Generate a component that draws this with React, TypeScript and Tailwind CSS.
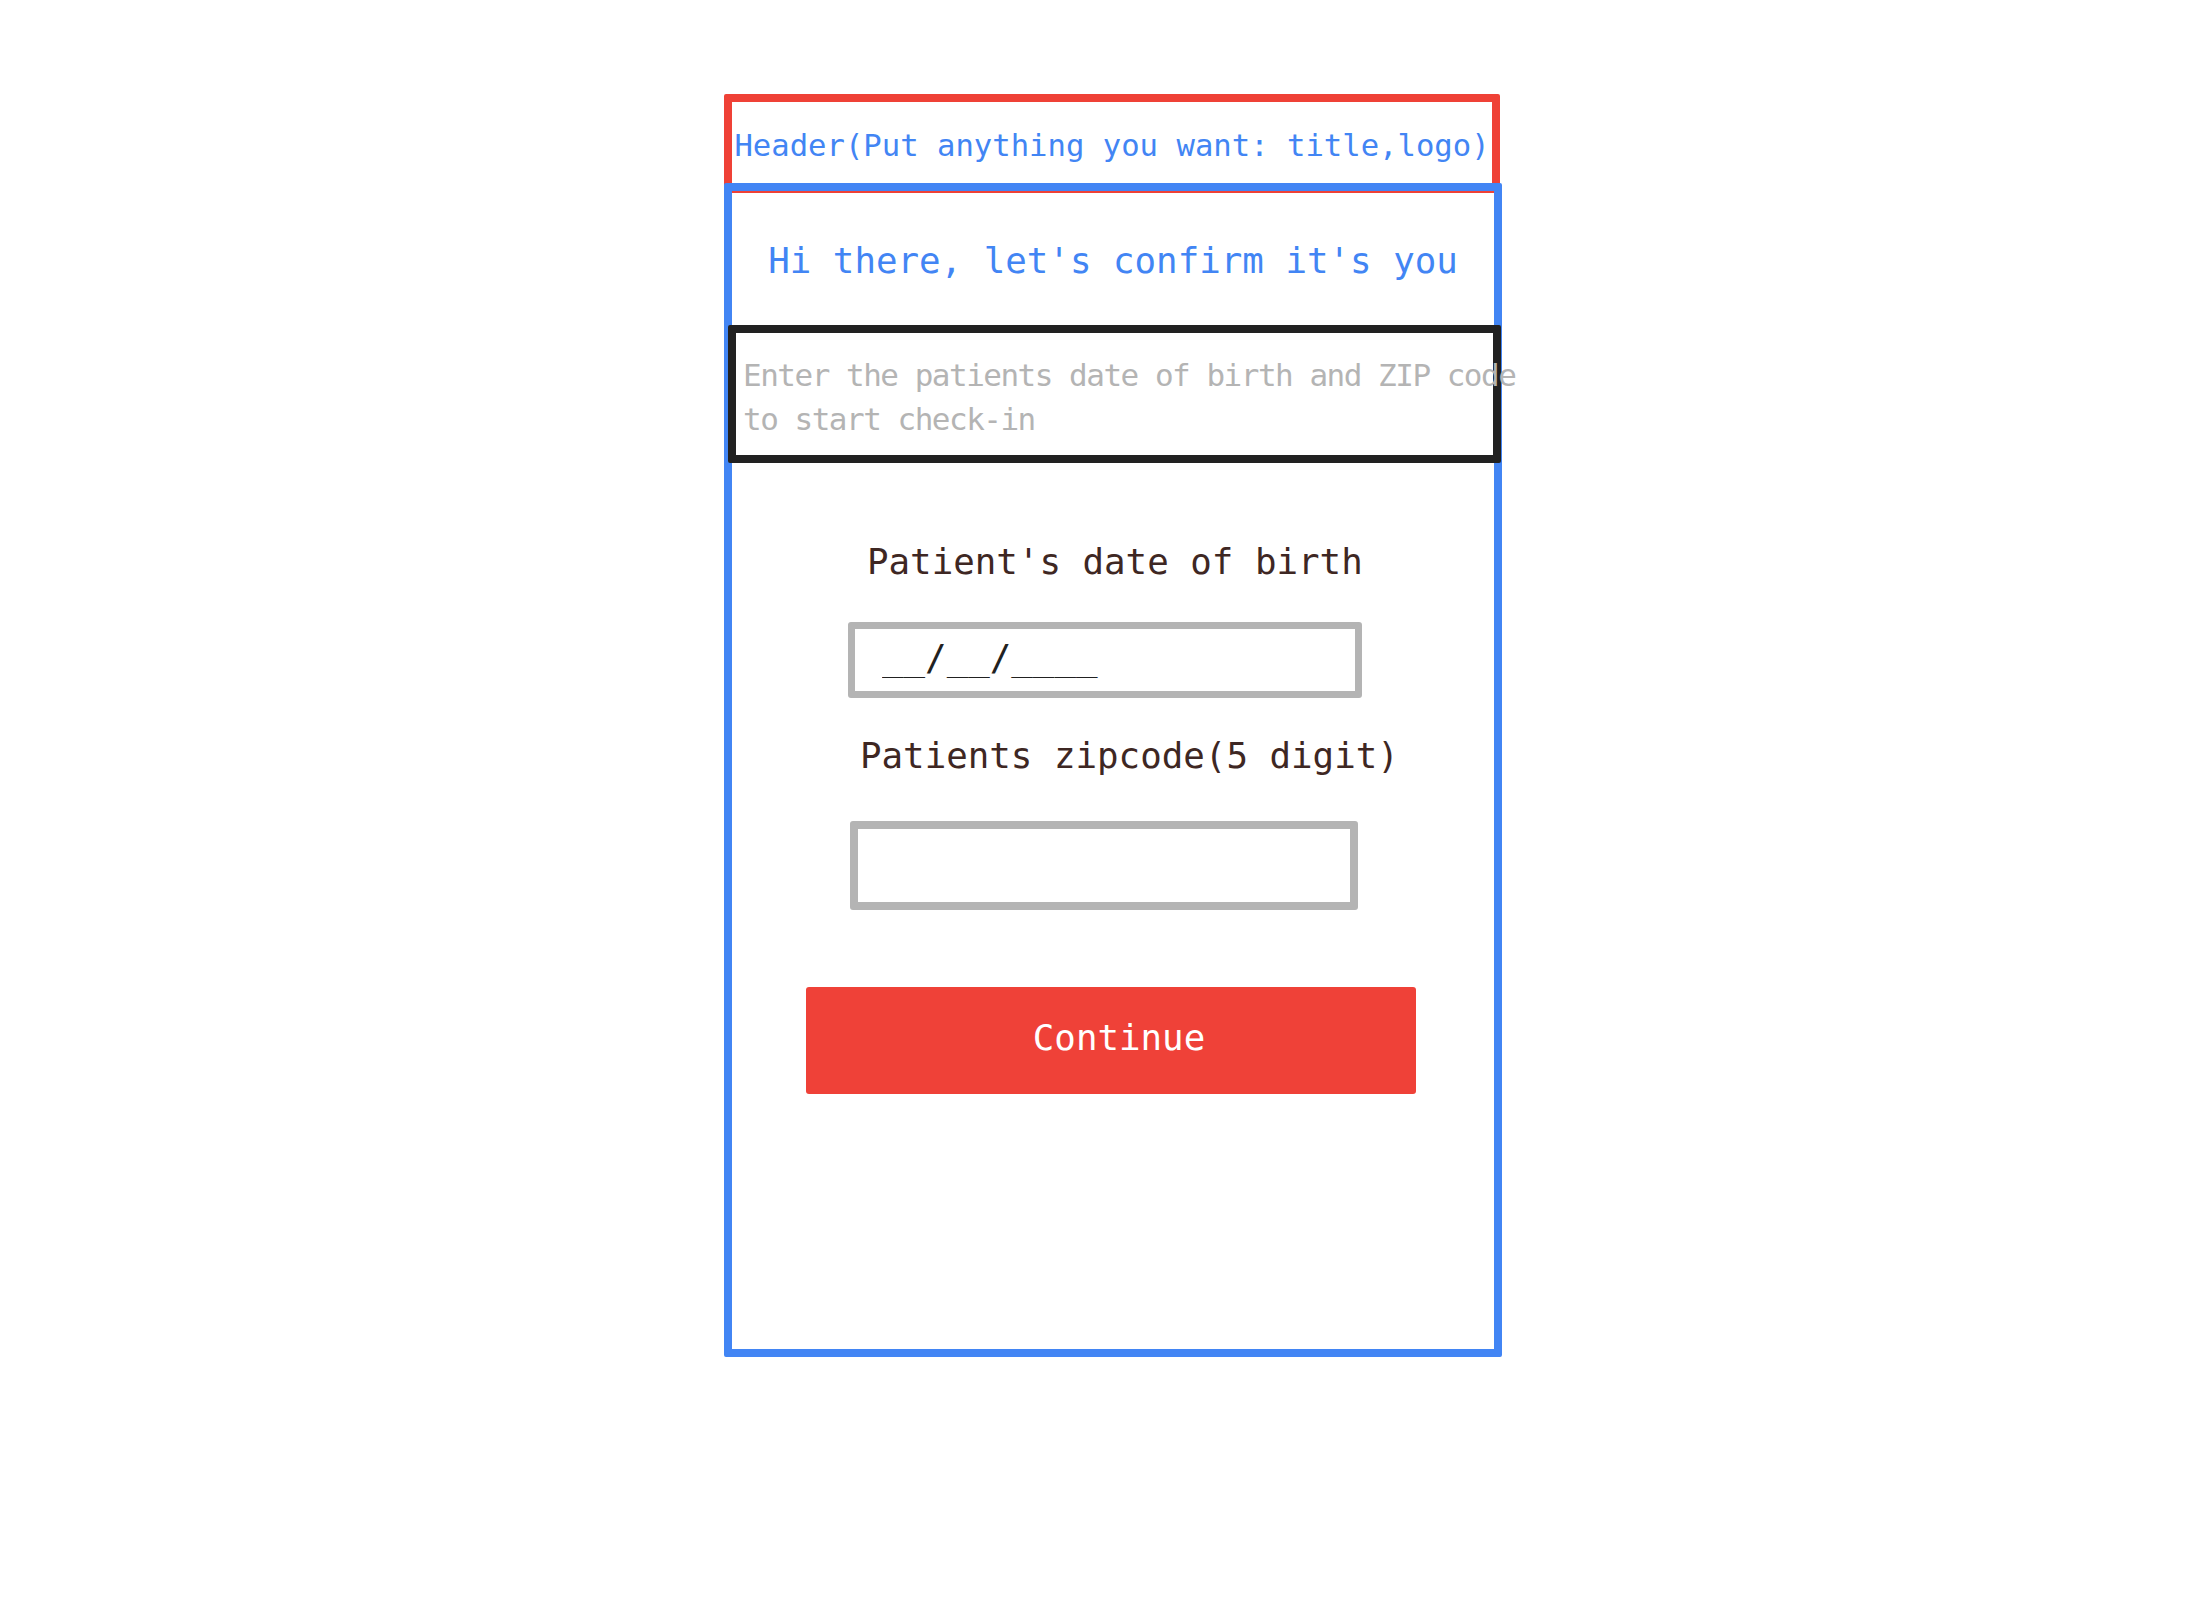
import { useState } from 'react'

const mono = { fontFamily: '"DejaVu Sans Mono", "Liberation Mono", monospace' }

export default function App() {
  const [dob, setDob] = useState('')
  const [zip, setZip] = useState('')

  return (
    <div className="min-h-screen bg-white flex justify-center pt-[94px]" style={mono}>
      <div className="w-[778px] ml-[19px]">
        {/* header */}
        <div className="w-[776px] h-[99px] border-[8px] border-[#ef4136] rounded-[2px] flex items-center justify-center pt-[5px] whitespace-nowrap text-[30.6px] leading-none text-[#4285f4]">
          Header(Put anything you want: title,logo)
        </div>

        {/* card */}
        <div className="-mt-[10px] h-[1174px] border-[8px] border-[#4285f4] rounded-[2px] flex flex-col">
          <div className="h-[134px] flex items-center justify-center pt-[5px] text-[35.8px] leading-none text-[#4285f4]">
            Hi there, let's confirm it's you
          </div>

          <div className="-ml-[4px] w-[773px] h-[138px] border-[8px] border-[#212121] rounded-[2px] pt-[20px] pl-[7px]">
            <p className="w-[800px] text-[31px] leading-[44px] tracking-[-1.5px] text-[#b4b4b4]">
              Enter the patients date of birth and ZIP code
              <br />
              to start check-in
            </p>
          </div>

          <div className="flex flex-col items-start">
            <label className="mt-[77px] ml-[135px] text-[35.8px] leading-[44px] text-[#3e2723]">
              Patient's date of birth
            </label>
            <div className="mt-[38px] ml-[116px] w-[514px] h-[76px] border-[7px] border-[#b4b4b4] rounded-[3px] flex items-center pl-[27px]">
              <input
                value={dob}
                onChange={(e) => setDob(e.target.value)}
                placeholder="__/__/____"
                className="w-full bg-transparent outline-none text-[35.8px] leading-none text-[#212121] placeholder:text-[#212121] -mt-[6px]"
              />
            </div>

            <label className="mt-[36px] ml-[128px] text-[35.8px] leading-[44px] text-[#3e2723]">
              Patients zipcode(5 digit)
            </label>
            <div className="mt-[43px] ml-[118px] w-[508px] h-[89px] border-[8px] border-[#b4b4b4] rounded-[3px] flex items-center px-[20px]">
              <input
                value={zip}
                onChange={(e) => setZip(e.target.value)}
                maxLength={5}
                className="w-full bg-transparent outline-none text-[35.8px] text-[#212121]"
              />
            </div>

            <button className="mt-[77px] ml-[74px] w-[610px] h-[107px] bg-[#ef4138] rounded-[3px] flex items-center justify-center pl-[16px] pb-[5px] text-[35.8px] leading-none text-white">
              Continue
            </button>
          </div>
        </div>
      </div>
    </div>
  )
}
